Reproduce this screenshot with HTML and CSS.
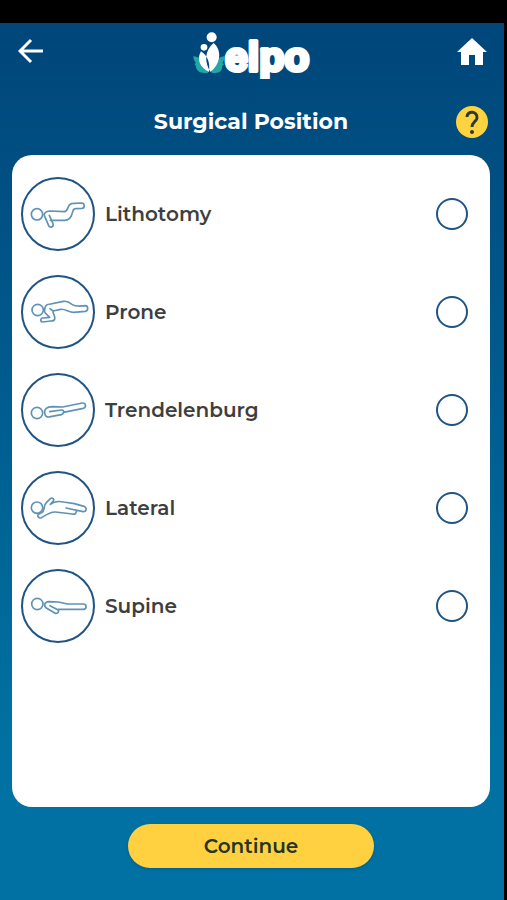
FILE: index.html
```html
<!DOCTYPE html>
<html lang="en">
<head>
<meta charset="utf-8">
<meta name="viewport" content="width=device-width, initial-scale=1">
<title>Surgical Position</title>
<link rel="stylesheet" href="styles.css">
</head>
<body>
<div class="status-bar"></div>
<form class="app">
  <header class="top-bar">
    <a class="back" href="#" aria-label="Back">
      <svg width="26" height="26" viewBox="0 0 26 26"><path d="M25 13H2M13 2 2 13l11 11"/></svg>
    </a>
    <svg class="logo" width="120" height="56" viewBox="0 0 360 168">
      <g transform="translate(0 25)">
        <path class="leaf" d="M1 75C18 76 36 88 43 116L46 124C22 128 9 119 9 104L4 98L9 95C3 88 1 82 1 75ZM95 75C78 76 64 88 57 116L55 124C79 128 88 119 88 104L93 98L88 95C93 88 95 82 95 75Z"/>
        <circle class="body" cx="56" cy="18" r="15"/>
        <circle class="body" cx="33" cy="48" r="10"/>
        <path class="body" d="M62 35C88 58 83 96 53 122C34 94 34 58 62 35ZM24 60C10 84 20 108 48 122C52 94 43 72 24 60Z"/>
      </g>
      <text class="wordmark" x="96" y="143">elpo</text>
    </svg>
    <a class="home" href="#" aria-label="Home">
      <svg width="30" height="27" viewBox="0 0 30 27"><path d="M15 0 30 14H26V27H18V17H12V27H4V14H0z"/></svg>
    </a>
  </header>
  <div class="title-row">
    <h1>Surgical Position</h1>
    <button class="help" type="button" aria-label="Help">
      <svg width="32" height="32" viewBox="0 0 32 32"><path d="M11 11C11 4 22 5 21 12C21 15 16 16 16 21"/><circle cx="16" cy="26" r="2"/></svg>
    </button>
  </div>
  <main class="card">
    <label class="option">
      <svg class="pose" viewBox="20 20 222 222"><circle class="ring" cx="131" cy="131" r="108"/><circle cx="68" cy="132" r="17"/><path d="M89 133C93 124 98 122 107 122L150 124C156 124 158 120 161 112C164 102 169 99 177 99L202 98C212 99 212 113 203 114L183 115C177 115 176 120 173 131C169 146 162 150 151 150H108M89 133L103 166C107 175 119 169 116 160L105 135"/></svg>
      <span class="name">Lithotomy</span>
      <input type="radio" name="position">
    </label>
    <label class="option">
      <svg class="pose" viewBox="20 20 222 222"><circle class="ring" cx="131" cy="131" r="108"/><circle cx="70" cy="125" r="17"/><path d="M91 124C92 109 98 108 109 107L147 99C159 97 166 102 173 108C181 114 192 115 213 112C223 113 222 127 213 129L178 132C163 132 153 121 139 123L116 128C114 136 125 144 121 153C119 158 115 158 109 158L85 161C76 159 79 148 86 149L106 147L93 134C90 131 90 128 91 124M107 121L116 128"/></svg>
      <span class="name">Prone</span>
      <input type="radio" name="position">
    </label>
    <label class="option">
      <svg class="pose" viewBox="20 20 222 222"><circle class="ring" cx="131" cy="131" r="108"/><circle cx="68" cy="140" r="17"/><path d="M145 122L204 110C215 109 217 122 207 126L147 138M145 122L115 121C96 122 90 128 91 139C92 151 99 154 109 151L141 145C151 142 150 130 141 131L106 136"/></svg>
      <span class="name">Trendelenburg</span>
      <input type="radio" name="position">
    </label>
    <label class="option">
      <svg class="pose" viewBox="20 20 222 222"><circle class="ring" cx="131" cy="131" r="108"/><circle cx="68" cy="130" r="17"/><path d="M84 143C94 133 85 126 96 115L108 103C114 98 122 105 116 111L108 120C118 111 132 110 148 113L180 118L209 126C220 131 216 143 206 142L155 131M186 138C187 147 182 151 174 149L123 143C108 142 99 149 82 160C73 164 66 153 74 149L86 142"/></svg>
      <span class="name">Lateral</span>
      <input type="radio" name="position">
    </label>
    <label class="option">
      <svg class="pose" viewBox="20 20 222 222"><circle class="ring" cx="131" cy="131" r="108"/><circle cx="69" cy="125" r="17"/><path d="M107 130L130 142C137 147 129 156 121 152L96 137C87 130 90 119 104 118L132 119L159 125H207C218 126 218 140 207 141H132"/></svg>
      <span class="name">Supine</span>
      <input type="radio" name="position">
    </label>
  </main>
  <button class="continue" type="submit">Continue</button>
</form>
</body>
</html>
```
FILE: styles.css
```css
* { box-sizing: border-box; }

body {
  margin: 0;
  min-height: 100vh;
  display: flex;
  flex-direction: column;
  background: #000;
  font-family: Montserrat, Inter, "Open Sans", sans-serif;
}

svg { display: block; }

.status-bar { height: 23px; }

.app {
  flex: 1;
  display: flex;
  flex-direction: column;
  margin-right: 3px;
  padding: 0 14px 32px 12px;
  background: linear-gradient(#00467a, #0071a2 82%);
}

.top-bar {
  display: grid;
  grid-template-columns: 1fr auto 1fr;
  align-items: center;
  height: 56px;
  padding: 0 3px 0 6px;
}

.back path { fill: none; stroke: #fff; stroke-width: 3; }
.home { justify-self: end; }
.home path { fill: #fff; }

.leaf { fill: #22a6a6; }
.body { fill: #fff; }
.wordmark {
  fill: #fff;
  stroke: #fff;
  stroke-width: 12;
  stroke-linejoin: round;
  font-family: "Liberation Sans", Arial, sans-serif;
  font-size: 123px;
  font-weight: 700;
}

.title-row {
  display: grid;
  grid-template-columns: 32px 1fr 32px;
  align-items: center;
  margin: 27px 0 17px;
  padding: 0 2px;
}

h1 {
  grid-column: 2;
  margin: 0;
  color: #fff;
  font-size: 22px;
  line-height: 32px;
  font-weight: 700;
  text-align: center;
}

.help {
  width: 32px;
  height: 32px;
  padding: 0;
  border: 0;
  border-radius: 50%;
  background: #ffd23f;
}
.help path { fill: none; stroke: #263b36; stroke-width: 3; }
.help circle { fill: #263b36; }

.card {
  flex: 1;
  display: flex;
  flex-direction: column;
  gap: 24px;
  padding: 22px 22px 22px 9px;
  border-radius: 20px;
  background: #fff;
}

.option { display: flex; align-items: center; gap: 10px; }

.pose {
  width: 74px;
  height: 74px;
  fill: none;
  stroke: #5f93b5;
  stroke-width: 5;
  stroke-linecap: round;
  stroke-linejoin: round;
}
.pose .ring { stroke: #205484; stroke-width: 6; }

.name {
  flex: 1;
  color: #3e3e3e;
  font-size: 20px;
  line-height: 24px;
  font-weight: 600;
}

input {
  appearance: none;
  width: 32px;
  height: 32px;
  margin: 0;
  border: 2px solid #205484;
  border-radius: 50%;
}
input:checked { background: #205484; box-shadow: inset 0 0 0 5px #fff; }

.continue {
  align-self: center;
  width: 246px;
  height: 44px;
  margin-top: 17px;
  border: 0;
  border-radius: 22px;
  background: #ffd140;
  box-shadow: 0 1px 3px #003c6066;
  color: #263426;
  font: inherit;
  font-size: 20px;
  font-weight: 600;
}
```
